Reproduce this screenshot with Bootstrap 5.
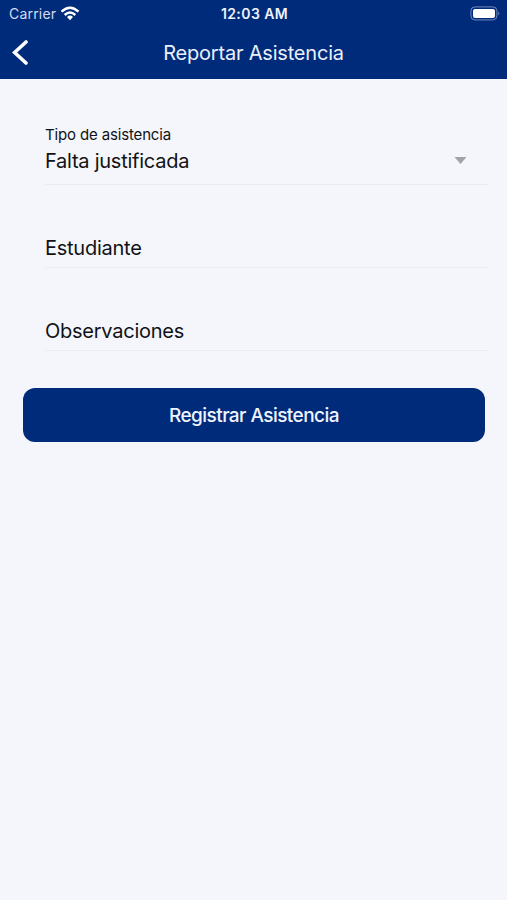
<!DOCTYPE html>
<html lang="es">
<head>
<meta charset="utf-8">
<meta name="viewport" content="width=device-width, initial-scale=1">
<title>Reportar Asistencia</title>
<link href="https://cdn.jsdelivr.net/npm/bootstrap@5.3.0/dist/css/bootstrap.min.css" rel="stylesheet">
<style>
body { font-family: Inter, "Liberation Sans", sans-serif; background: #f4f6fb; color: #111216; min-height: 100vh; }
.app-header { background: #002b7a; height: 79px; }
.status-bar { height: 27px; font-size: 14px; line-height: 27px; padding: 0 7px 0 9px; }
.status-bar > div { flex: 1 1 0; }
.carrier { color: #d3dcf0; letter-spacing: .2px; }
.clock { font-size: 14px; letter-spacing: .42px; color: #eef2fb; }
.title-bar { height: 52px; padding: 0 12px; }
.title-bar .side { width: 17px; }
.title-bar h1 { font-size: 20px; line-height: 52px; font-weight: 400; color: #eaf0fb; letter-spacing: -.2px; }
.form-area { padding: 0 19px 0 45px; }
.field-line { border-bottom: 1px solid #e9ebf0; font-size: 20px; line-height: 26px; letter-spacing: -.25px; }
.field-type { height: 106px; padding-top: 45px; }
.field-type label { font-size: 15px; line-height: 22px; letter-spacing: -.15px; margin-bottom: 2px; }
.field-plain { height: 83px; padding-top: 50px; }
.btn-register { --bs-btn-bg: #002b7a; --bs-btn-color: #eff4ff; --bs-btn-hover-bg: #00358f; --bs-btn-hover-color: #fff; --bs-btn-border-width: 0; --bs-btn-border-radius: 12px; --bs-btn-padding-y: 0; height: 54px; font-size: 19px; line-height: 28px; padding-top: 2px; letter-spacing: -.55px; margin: 37px 22px 0 23px; }
</style>
</head>
<body>
<header class="app-header">
  <div class="status-bar d-flex align-items-center">
    <div class="carrier d-flex align-items-center">
      <span>Carrier</span>
      <svg class="ms-1" width="20" height="15" viewBox="0 0 20 15" fill="none" stroke="#fff" stroke-width="2.5"><path d="M1.5 5.6Q10-2.2 18.5 5.6M4.7 9Q10 4.1 15.3 9"/><path d="M7 10.9Q10 8.3 13 10.9L10 14.2Z" fill="#fff" stroke="none"/></svg>
    </div>
    <div class="clock text-center fw-semibold">12:03 AM</div>
    <div class="d-flex justify-content-end">
      <svg width="30" height="15" viewBox="0 0 30 15"><rect x=".9" y=".9" width="26" height="13" rx="4" fill="none" stroke="#7189b9" stroke-width="1"/><rect x="3" y="3" width="22" height="9" rx="2" fill="#fff"/><path d="M28.3 5.5Q30.3 7.5 28.3 9.5Z" fill="#7189b9"/></svg>
    </div>
  </div>
  <div class="title-bar d-flex justify-content-between align-items-center">
    <a href="#" class="side d-flex" aria-label="Volver"><svg width="17" height="26" viewBox="0 0 17 26" fill="none" stroke="#fff" stroke-width="3.6" stroke-linecap="round" stroke-linejoin="miter"><path d="M14 2 2.6 12.5 14 23"/></svg></a>
    <h1 class="m-0">Reportar Asistencia</h1>
    <span class="side"></span>
  </div>
</header>
<main>
  <form>
    <div class="form-area">
      <div class="field-line field-type">
        <label class="d-block">Tipo de asistencia</label>
        <div class="d-flex align-items-center justify-content-between">
          <span>Falta justificada</span>
          <svg class="me-3" width="20" height="8" viewBox="0 0 20 8"><path d="M2.5 0H14.5L8.5 7Z" fill="#a1a3a8"/></svg>
        </div>
      </div>
      <div class="field-line field-plain">Estudiante</div>
      <div class="field-line field-plain">Observaciones</div>
    </div>
    <div class="d-flex"><button type="button" class="btn btn-register flex-fill fw-medium">Registrar Asistencia</button></div>
  </form>
</main>
<script src="https://cdn.jsdelivr.net/npm/bootstrap@5.3.0/dist/js/bootstrap.bundle.min.js"></script>
</body>
</html>
